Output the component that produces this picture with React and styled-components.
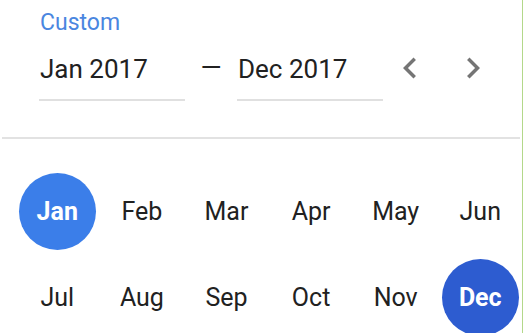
import React from "react";
import styled, { createGlobalStyle } from "styled-components";

const Global = createGlobalStyle`
  html, body { margin: 0; padding: 0; background: #fff; }
  body { font-family: Roboto, "Noto Sans", Arial, sans-serif; }
`;

const Page = styled.div`
  width: 522px;
  height: 333px;
  border-right: 1px solid #b3d88a;
  overflow: hidden;
  background: #fff;
`;

const Header = styled.div`
  padding: 9px 0 0 39px;
`;

const Label = styled.div`
  font-size: 23px;
  line-height: 27px;
  color: #4a86e0;
  margin-bottom: 17px;
  padding-left: 1px;
`;

const FieldRow = styled.div`
  display: flex;
  align-items: flex-start;
`;

const Field = styled.div`
  width: 146px;
  height: 48px;
  box-sizing: border-box;
  font-size: 26px;
  line-height: 32px;
  color: #212121;
  padding: 0 0 14px 1px;
  border-bottom: 2px solid #e0e0e0;
`;

const Dash = styled.div`
  width: 52px;
  text-align: center;
  font-size: 27px;
  line-height: 32px;
  color: #212121;
  margin-top: -1px;
`;

const NavButton = styled.button`
  width: 42px;
  height: 42px;
  padding: 0;
  border: none;
  background: transparent;
  margin-top: -6px;
  margin-left: ${(p) => p.$gap}px;
  display: flex;
  cursor: pointer;
  svg { width: 42px; height: 42px; fill: #757575; }
`;

const Divider = styled.div`
  height: 2px;
  background: #e2e2e2;
  margin: 36px 2px 0 2px;
`;

const MonthGrid = styled.div`
  display: grid;
  grid-template-columns: repeat(6, 84.6px);
  grid-auto-rows: 85.5px;
  margin-top: 30px;
  padding-left: 15px;
`;

const Cell = styled.div`
  display: flex;
  align-items: center;
  justify-content: center;
`;

const Month = styled.div`
  width: 77px;
  height: 77px;
  border-radius: 50%;
  display: flex;
  align-items: center;
  justify-content: center;
  font-size: 25px;
  font-weight: ${(p) => (p.$tone ? 700 : 400)};
  color: ${(p) => (p.$tone ? "#fff" : "#212121")};
  background: ${(p) =>
    p.$tone === "start" ? "#3b7ee9" : p.$tone === "end" ? "#2d5cd0" : "transparent"};
`;

const months = ["Jan", "Feb", "Mar", "Apr", "May", "Jun", "Jul", "Aug", "Sep", "Oct", "Nov", "Dec"];

export default function App() {
  return (
    <>
      <Global />
      <Page>
        <Header>
          <Label>Custom</Label>
          <FieldRow>
            <Field>Jan 2017</Field>
            <Dash>—</Dash>
            <Field>Dec 2017</Field>
            <NavButton $gap={6} aria-label="Previous">
              <svg viewBox="0 0 24 24">
                <path d="M15.41 7.41L14 6l-6 6 6 6 1.41-1.41L10.83 12z" />
              </svg>
            </NavButton>
            <NavButton $gap={21} aria-label="Next">
              <svg viewBox="0 0 24 24">
                <path d="M10 6L8.59 7.41 13.17 12l-4.58 4.59L10 18l6-6z" />
              </svg>
            </NavButton>
          </FieldRow>
        </Header>
        <Divider />
        <MonthGrid>
          {months.map((m, i) => (
            <Cell key={m}>
              <Month $tone={i === 0 ? "start" : i === 11 ? "end" : undefined}>{m}</Month>
            </Cell>
          ))}
        </MonthGrid>
      </Page>
    </>
  );
}
